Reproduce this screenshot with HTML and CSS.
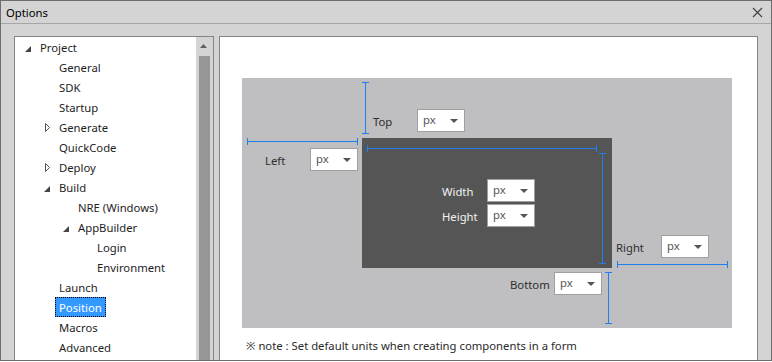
FILE: index.html
```html
<!DOCTYPE html>
<html>
<head>
<meta charset="utf-8">
<link rel="stylesheet" href="styles.css">
</head>
<body>
<div class="window">
  <div class="titlebar">
    <span class="title">Options</span>
    <svg class="close" width="11" height="11" viewBox="0 0 11 11"><path d="M1 1L10 10M10 1L1 10" stroke="#444" stroke-width="1.2"/></svg>
  </div>
  <div class="body">
    <div class="tree-panel">
      <div class="tree">
        <div class="row l0"><svg class="tw" viewBox="0 0 19 20"><polygon points="13,9 13,15 7,15" fill="#444"/></svg><span class="lbl">Project</span></div>
        <div class="row l1"><span class="tw"></span><span class="lbl">General</span></div>
        <div class="row l1"><span class="tw"></span><span class="lbl">SDK</span></div>
        <div class="row l1"><span class="tw"></span><span class="lbl">Startup</span></div>
        <div class="row l1"><svg class="tw" viewBox="0 0 19 20"><polygon points="8.5,6.5 12.5,10.5 8.5,14.5" fill="none" stroke="#555"/></svg><span class="lbl">Generate</span></div>
        <div class="row l1"><span class="tw"></span><span class="lbl">QuickCode</span></div>
        <div class="row l1"><svg class="tw" viewBox="0 0 19 20"><polygon points="8.5,6.5 12.5,10.5 8.5,14.5" fill="none" stroke="#555"/></svg><span class="lbl">Deploy</span></div>
        <div class="row l1"><svg class="tw" viewBox="0 0 19 20"><polygon points="13,9 13,15 7,15" fill="#444"/></svg><span class="lbl">Build</span></div>
        <div class="row l2"><span class="tw"></span><span class="lbl">NRE (Windows)</span></div>
        <div class="row l2"><svg class="tw" viewBox="0 0 19 20"><polygon points="13,9 13,15 7,15" fill="#444"/></svg><span class="lbl">AppBuilder</span></div>
        <div class="row l3"><span class="tw"></span><span class="lbl">Login</span></div>
        <div class="row l3"><span class="tw"></span><span class="lbl">Environment</span></div>
        <div class="row l1"><span class="tw"></span><span class="lbl">Launch</span></div>
        <div class="row l1"><span class="tw"></span><span class="lbl selected">Position</span></div>
        <div class="row l1"><span class="tw"></span><span class="lbl">Macros</span></div>
        <div class="row l1"><span class="tw"></span><span class="lbl">Advanced</span></div>
      </div>
      <div class="scrollbar">
        <svg class="sb-up" width="17" height="10" viewBox="0 0 17 10"><polygon points="4,8 11,8 7.5,4" fill="#606060"/></svg>
        <div class="thumb"></div>
      </div>
    </div>
    <div class="right-panel">
      <div class="canvas">
        <svg class="measures" width="490" height="250" viewBox="0 0 490 250" shape-rendering="crispEdges">
          <g stroke="#1f7ff0" stroke-width="1" fill="none">
            <path d="M123.5 4V56M120 4.5H127M120 55.5H127"/>
            <path d="M5 63.5H116M5.5 60V67M115.5 60V67"/>
            <path d="M125 70.5H355M125.5 67V74M354.5 67V74"/>
            <path d="M360.5 75V186M357 75.5H364M357 185.5H364"/>
            <path d="M375 186.5H486M375.5 183V190M485.5 183V190"/>
            <path d="M366.5 194V246M363 194.5H370M363 245.5H370"/>
          </g>
        </svg>
        <div class="field f-top"><span class="flabel w44">Top</span><div class="dd">px</div></div>
        <div class="field f-left"><span class="flabel">Left</span><div class="dd">px</div></div>
        <div class="box">
          <div class="size-grid">
            <span class="flabel light">Width</span><div class="dd">px</div>
            <span class="flabel light">Height</span><div class="dd">px</div>
          </div>
        </div>
        <div class="field f-right"><span class="flabel">Right</span><div class="dd">px</div></div>
        <div class="field f-bottom"><span class="flabel w44">Bottom</span><div class="dd">px</div></div>
      </div>
      <div class="note">※ note : Set default units when creating components in a form</div>
    </div>
  </div>
</div>
</body>
</html>
```
FILE: styles.css
```css
html, body {
  margin: 0;
  background: #ffffff;
}
body {
  font-family: "Noto Sans", "Noto Sans CJK JP", sans-serif;
  font-size: 11.3px;
  color: #1e1e1e;
}
.window {
  width: 772px;
  height: 361px;
  box-sizing: border-box;
  border: 1px solid #6e6e6e;
  background: #d4d4d4;
  display: flex;
  flex-direction: column;
  overflow: hidden;
}
.titlebar {
  height: 23px;
  flex: none;
  border-bottom: 1px solid #a6a6a6;
  display: flex;
  align-items: center;
  justify-content: space-between;
  padding: 1px 8px 0 5px;
  box-sizing: border-box;
}
.title {
  color: #000;
}
.close {
  display: block;
}
.body {
  flex: 1;
  min-height: 0;
  display: flex;
  gap: 5px;
  padding: 12px 0 0 13px;
}
.tree-panel {
  width: 200px;
  box-sizing: border-box;
  border: 1px solid #848484;
  border-bottom: none;
  background: #fff;
  display: flex;
}
.tree {
  flex: 1;
}
.row {
  height: 20px;
  display: flex;
  align-items: center;
  padding-left: 3px;
}
.row.l1 { padding-left: 22px; }
.row.l2 { padding-left: 41px; }
.row.l3 { padding-left: 60px; }
.tw {
  width: 19px;
  height: 20px;
  flex: none;
  display: block;
}
.lbl {
  padding: 1px 3px 0;
  line-height: 17px;
  border: 1px solid transparent;
  margin-left: -1px;
  white-space: nowrap;
}
.lbl.selected {
  background: #3399ff;
  color: #fff;
  border: 1px dotted #000;
}
.scrollbar {
  width: 17px;
  background: #d4d4d4;
  display: flex;
  flex-direction: column;
  align-items: center;
}
.sb-up {
  display: block;
  margin-top: 3px;
}
.thumb {
  margin-top: 6px;
  width: 11px;
  flex: 1;
  background: #969696;
}
.right-panel {
  width: 539px;
  box-sizing: border-box;
  border: 1px solid #848484;
  border-bottom: none;
  background: #fff;
  padding: 41px 0 0 22px;
}
.canvas {
  position: relative;
  width: 490px;
  height: 250px;
  background: #bfbfc1;
}
.measures {
  position: absolute;
  left: 0;
  top: 0;
  z-index: 2;
}
.box {
  position: absolute;
  left: 120px;
  top: 60px;
  width: 250px;
  height: 130px;
  background: #555555;
  box-sizing: border-box;
  padding: 41px 0 0 80px;
}
.size-grid {
  display: grid;
  grid-template-columns: 45px 48px;
  grid-auto-rows: 23px;
  row-gap: 2px;
  align-items: center;
}
.field {
  position: absolute;
  display: flex;
  align-items: center;
}
.f-top { left: 131px; top: 31px; }
.f-left { left: 23px; top: 70px; }
.f-right { left: 374px; top: 157px; }
.f-bottom { left: 268px; top: 194px; }
.flabel {
  width: 45px;
  color: #2e2e2e;
  padding-top: 2px;
}
.flabel.w44 { width: 44px; }
.flabel.light { color: #f2f2f2; }
.dd {
  position: relative;
  width: 48px;
  height: 23px;
  box-sizing: border-box;
  border: 1px solid #a0a0a0;
  background: #fff;
  color: #555;
  padding-left: 5px;
  line-height: 20px;
}
.dd::after {
  content: "";
  position: absolute;
  right: 6px;
  top: 9px;
  border-left: 4px solid transparent;
  border-right: 4px solid transparent;
  border-top: 4px solid #555;
}
.note {
  margin-top: 10px;
  padding-left: 4px;
  color: #2a2a2a;
  line-height: 16px;
}
```
